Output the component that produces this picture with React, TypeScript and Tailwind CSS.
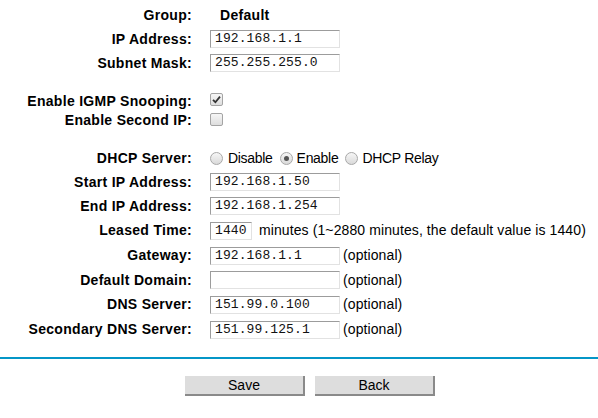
import React from 'react';

const font = { fontFamily: '"Liberation Sans", Arial, sans-serif' };

function Field({ value, width = 'w-[130px]' }: { value: string; width?: string }) {
  return (
    <div
      className={`${width} h-[18px] border border-t-[#9c9c9c] border-l-[#9c9c9c] border-r-[#e2e2e2] border-b-[#e2e2e2] bg-white pl-[4px] text-[13px] leading-[16px] text-[#111]`}
      style={{ fontFamily: '"Liberation Mono", "Courier New", monospace' }}
    >
      {value}
    </div>
  );
}

function Checkbox({ checked }: { checked?: boolean }) {
  return (
    <div className="w-[13px] h-[13px] rounded-[2px] border border-[#a4a4a4] bg-gradient-to-b from-[#f6f6f6] to-[#dedede] flex items-center justify-center">
      {checked && (
        <svg width="9" height="9" viewBox="0 0 9 9">
          <path d="M1 4.8 L3.4 7.2 L8 1.6" fill="none" stroke="#333" strokeWidth="1.8" />
        </svg>
      )}
    </div>
  );
}

function Radio({ checked }: { checked?: boolean }) {
  return (
    <div className="w-[13px] h-[13px] rounded-full border border-[#a8a8a8] bg-gradient-to-b from-[#f6f6f6] to-[#dadada] flex items-center justify-center">
      {checked && <div className="w-[5px] h-[5px] rounded-full bg-[#555]" />}
    </div>
  );
}

function Row({ label, h = 'h-[24px]', children }: { label: string; h?: string; children?: React.ReactNode }) {
  return (
    <div className={`flex items-center ${h}`}>
      <div className="w-[192px] text-right font-bold text-[14px] tracking-[0.3px] text-black">{label}</div>
      <div className="pl-[18px] flex items-center text-[14px] tracking-[0.1px] text-black">{children}</div>
    </div>
  );
}

export default function App() {
  return (
    <div className="w-[598px] h-[418px] bg-white pt-[3px]" style={font}>
      <Row label="Group:">
        <span className="ml-[10px] font-bold tracking-[0.3px]">Default</span>
      </Row>
      <Row label="IP Address:">
        <Field value="192.168.1.1" />
      </Row>
      <Row label="Subnet Mask:">
        <Field value="255.255.255.0" />
      </Row>

      <div className="h-[17px]" />
      <Row label="Enable IGMP Snooping:" h="h-[19px]">
        <div className="-mt-[4px]">
          <Checkbox checked />
        </div>
      </Row>
      <Row label="Enable Second IP:" h="h-[19px]">
        <div className="-mt-[3px]">
          <Checkbox />
        </div>
      </Row>

      <div className="h-[16px]" />
      <Row label="DHCP Server:">
        <div className="flex items-center tracking-[-0.3px]">
          <Radio />
          <span className="ml-[5px] mr-[7px]">Disable</span>
          <Radio checked />
          <span className="ml-[4px] mr-[7px]">Enable</span>
          <Radio />
          <span className="ml-[4px]">DHCP Relay</span>
        </div>
      </Row>
      <Row label="Start IP Address:">
        <Field value="192.168.1.50" />
      </Row>
      <Row label="End IP Address:">
        <Field value="192.168.1.254" />
      </Row>
      <Row label="Leased Time:" h="h-[25px]">
        <Field value="1440" width="w-[42px]" />
        <span className="ml-[7px]">minutes (1~2880 minutes, the default value is 1440)</span>
      </Row>
      <Row label="Gateway:" h="h-[25px]">
        <Field value="192.168.1.1" />
        <span className="ml-[3px]">(optional)</span>
      </Row>
      <Row label="Default Domain:">
        <Field value="" />
        <span className="ml-[3px]">(optional)</span>
      </Row>
      <Row label="DNS Server:" h="h-[25px]">
        <Field value="151.99.0.100" />
        <span className="ml-[3px]">(optional)</span>
      </Row>
      <Row label="Secondary DNS Server:" h="h-[25px]">
        <Field value="151.99.125.1" />
        <span className="ml-[3px]">(optional)</span>
      </Row>

      <div className="mt-[15px] h-[2px] bg-[#0496c7]" />

      <div className="mt-[17px] ml-[185px] flex gap-[10px]">
        <button className="w-[120px] h-[20px] bg-[#dddddd] border-r-2 border-b-2 border-r-[#8a8a8a] border-b-[#8a8a8a] text-[14px] leading-[18px] text-black">
          Save
        </button>
        <button className="w-[120px] h-[20px] bg-[#dddddd] border-r-2 border-b-2 border-r-[#8a8a8a] border-b-[#8a8a8a] text-[14px] leading-[18px] text-black">
          Back
        </button>
      </div>
    </div>
  );
}
